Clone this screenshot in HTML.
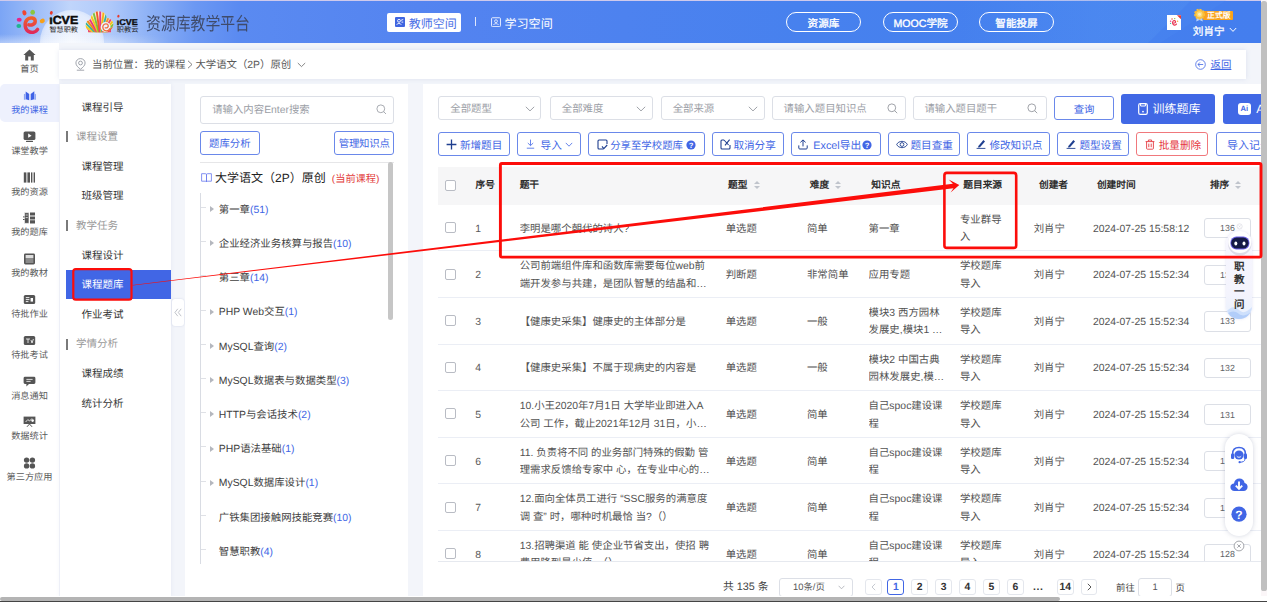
<!DOCTYPE html>
<html lang="zh-CN">
<head>
<meta charset="utf-8">
<title>资源库教学平台</title>
<style>
html,body{margin:0;padding:0}
body{width:1267px;height:602px;overflow:hidden;position:relative;background:#f3f5fa;font-family:"Liberation Sans",sans-serif;font-size:10.4px;line-height:14px;color:#333;text-rendering:geometricPrecision;-webkit-font-smoothing:antialiased}
*{box-sizing:border-box}
.abs{position:absolute}
svg{display:block}
/* ---------- header ---------- */
#hdr{position:absolute;left:0;top:0;width:1261px;height:43.4px;overflow:hidden;
 background:linear-gradient(90deg,#7ba5f5 0,#98b9f7 30px,#c0d5fb 70px,#afc9fa 110px,#8db1f6 150px,#6c98f3 195px,#5a8af1 240px,#5383f0 450px,#4781ee 800px,#4580ee 1000px,#447eee 1261px)}
#hdr .cloud{position:absolute;left:40px;top:10px;width:64px;height:64px;border-radius:50%;background:radial-gradient(circle,rgba(255,255,255,.8) 0,rgba(255,255,255,.6) 62%,rgba(255,255,255,0) 100%)}
#hdr .glow{position:absolute;left:0;top:34px;width:170px;height:10px;background:linear-gradient(180deg,rgba(255,255,255,0),rgba(255,255,255,.45));-webkit-mask-image:linear-gradient(90deg,#000 0,#000 60%,transparent 100%)}
#hdr .topline{position:absolute;left:0;top:0;width:100%;height:1px;background:#cfcaec}
#title{position:absolute;left:146px;top:12.6px;font-size:18px;line-height:22px;color:#3f4b6b;white-space:nowrap;transform:scaleX(.825);transform-origin:0 0;font-weight:300}
.pill{position:absolute;top:12px;height:20px;width:75px;border:1px solid #fff;border-radius:10px;color:#fff;font-size:10.6px;line-height:18px;padding-top:1.6px;text-align:center;-webkit-text-stroke:.35px #fff;white-space:nowrap}
#tsp{position:absolute;left:387px;top:12.8px;width:74px;height:19.2px;background:#fff;border-radius:2px;color:#4a6fe6;font-size:12px;line-height:19px;white-space:nowrap}
#lsp{position:absolute;left:491px;top:13px;height:19px;color:#fff;font-size:12.1px;line-height:19px;white-space:nowrap}
#uname{position:absolute;left:1192.8px;top:23.6px;color:#fff;font-size:10.6px;line-height:16px;white-space:nowrap;-webkit-text-stroke:.3px #fff}
#badge{position:absolute;left:1203px;top:10.6px;width:29.6px;height:9.4px;background:#f9a31c;color:#fff;font-size:7.8px;line-height:9.4px;font-weight:bold;padding-left:2px;text-align:center;border-radius:1px;white-space:nowrap}
/* ---------- left nav ---------- */
#nav{position:absolute;left:0;top:43px;width:59px;height:554px;background:#fff}
.ni{position:absolute;left:0;width:59px;height:38px;text-align:center;font-size:9.2px;line-height:12px;color:#5a5a5a;white-space:nowrap}
.ni svg{position:absolute;left:23px;top:6px}
.ni span{position:absolute;left:0;width:59px;top:20px}
.ni.on{background:#eef1fd;border-radius:5px 0 0 5px;color:#4166e5}
/* ---------- breadcrumb ---------- */
#bc{position:absolute;left:59px;top:49.6px;width:1187.4px;height:29.4px;background:#fff;box-shadow:0 0 5px rgba(120,140,190,.18);font-size:10.4px;line-height:29px;color:#585858;white-space:nowrap}
/* ---------- side menu ---------- */
#sm{position:absolute;left:60px;top:84px;width:111px;height:513px;background:#fff;box-shadow:0 0 4px rgba(120,140,190,.12)}
.mi{position:absolute;left:0;width:111px;height:29.6px;line-height:29.6px;padding-top:1.7px;font-size:10.5px;color:#363636;padding-left:21.5px;white-space:nowrap}
.mg{position:absolute;left:0;width:111px;height:29.6px;line-height:29.6px;padding-top:1.7px;font-size:10.5px;color:#999;padding-left:16px;white-space:nowrap}
.mg:before{content:"";position:absolute;left:6.3px;top:9.8px;width:1.3px;height:11px;background:#7a7a7a}
.mi.on{background:#4166e5;color:#fff;left:6px;width:105px;padding-left:15.5px}

/* ---------- tree panel ---------- */
#tp{position:absolute;left:185px;top:84px;width:223.4px;height:513px;background:#fff}
.inp{position:absolute;border:1px solid #dcdfe6;border-radius:3px;background:#fff;color:#9b9ea6;font-size:10.4px;white-space:nowrap}
.ob{position:absolute;height:23.4px;border:1px solid #6a88ea;border-radius:3px;background:#fff;color:#4166e5;font-size:10.4px;line-height:21.4px;white-space:nowrap;padding-top:2.6px}
.tn{position:absolute;left:33.8px;height:14px;line-height:14px;margin-top:1.3px;font-size:10.4px;color:#404040;white-space:nowrap}
.tn i{font-style:normal;color:#4166e5}
.tk{position:absolute;left:15.6px;width:5.8px;height:1px;background:#dfe1e6;margin-top:-2.6px}
.ta{position:absolute;left:25.4px;width:0;height:0;margin-top:-.5px;border-left:4.4px solid #b4b7be;border-top:3.3px solid transparent;border-bottom:3.3px solid transparent}

/* ---------- main panel ---------- */
#mp{position:absolute;left:423px;top:84px;width:838px;height:513px;background:#fff;overflow:hidden}
.sel{position:absolute;top:12.2px;height:23.4px;line-height:21.4px;padding-left:11px;padding-top:2px}
.sel svg{position:absolute;top:8.4px}
.b2{top:48.4px;padding:0;text-align:left}
.b2 svg{position:absolute}
.b2 span{position:absolute;top:2.6px}
.pb{position:absolute;top:9.6px;height:30px;border-radius:3px;background:#4168e5;color:#fff;font-size:12px;line-height:30px;white-space:nowrap}
/* table */
#th{position:absolute;left:15.3px;top:82.6px;width:830px;height:38.2px;background:#f6f6f7;font-weight:bold;color:#2e2e2e;font-size:9.7px}
#th span{position:absolute;top:12.3px;line-height:14px;white-space:nowrap}
.so{position:absolute;top:14.4px;width:6px;height:10px}
.so:before,.so:after{content:"";position:absolute;left:0;border-left:3px solid transparent;border-right:3px solid transparent}
.so:before{top:0;border-bottom:3.6px solid #c0c4cc}
.so:after{top:5.4px;border-top:3.6px solid #c0c4cc}
#tb{position:absolute;left:15.3px;top:120.8px;width:830px;height:356.6px;overflow:hidden}
.tr{position:absolute;left:0;width:830px;height:46.6px;border-bottom:1px solid #ebeef5}
.c{position:absolute;top:0;height:45.6px;padding-top:3.4px;display:flex;align-items:center;line-height:17.4px;color:#525252}
.c p{margin:0;max-height:34.8px;overflow:hidden}
.ck{position:absolute;left:6.6px;width:11px;height:11px;border:1px solid #b9bcc4;border-radius:2px;background:#fff}
.c1{left:37px;color:#5a5a5a}.c2{left:81.4px;width:190px}.c3{left:287.4px}.c4{left:368.7px}.c5{left:430.3px;width:76px}.c6{left:521.7px;width:48px}.c7{left:595.4px}.c8{left:654.6px;white-space:nowrap}
.si{position:absolute;left:765.9px;top:13.2px;width:46.5px;height:20.4px;border:1px solid #dcdfe6;border-radius:3px;text-align:center;font-size:8.8px;line-height:18.4px;padding-top:.2px;color:#606266}
/* pagination */
#pg{position:absolute;left:0;top:490px;width:838px;height:23px;font-size:10.4px;color:#444}
#pg .n{position:absolute;top:4.9px;width:16.8px;height:16.6px;border:1px solid #e4e7ed;border-radius:3px;text-align:center;line-height:14.6px;padding-top:.9px;font-weight:bold;color:#333;background:#fff;font-size:10.4px}
#pg .n.on{border-color:#4166e5;color:#4166e5}
</style>
</head>
<body>

<!-- ================= HEADER ================= -->
<div id="hdr">
  <div class="cloud"></div>
  <div class="glow"></div>
  <div class="topline"></div>
  <svg class="abs" style="left:960px;top:0" width="301" height="43" viewBox="0 0 301 43"><defs><linearGradient id="sg" x1="0" y1="0" x2="1" y2="0"><stop offset="0" stop-color="#5a9bf5" stop-opacity="0"/><stop offset=".6" stop-color="#5a9bf5" stop-opacity=".3"/><stop offset="1" stop-color="#5a9bf5" stop-opacity=".3"/></linearGradient></defs><path d="M0 0 H231.5 L188 43 H0 Z" fill="url(#sg)"/><path d="M231.5 0 H266.6 L200 43 H188 Z" fill="#5a9bf5" opacity=".12"/></svg>
  <svg class="abs" style="left:0;top:0" width="146" height="43" viewBox="0 0 146 43">
    <defs>
      <linearGradient id="eg" x1="0" y1="0" x2="0" y2="1"><stop offset="0" stop-color="#f0602a"/><stop offset="1" stop-color="#e02a5a"/></linearGradient>
    </defs>
    <!-- logo 1 -->
    <ellipse cx="24.4" cy="12.8" rx="2" ry="2.6" fill="#f0452f" transform="rotate(-20 24.4 12.8)"/>
    <ellipse cx="32.7" cy="12.2" rx="2.3" ry="2.5" fill="#8cc63f"/>
    <ellipse cx="19.2" cy="19.7" rx="2.5" ry="2" fill="#e6258a"/>
    <ellipse cx="18.8" cy="26" rx="2.4" ry="1.9" fill="#1fb58f"/>
    <ellipse cx="42.3" cy="20.9" rx="2.6" ry="2.2" fill="#f6a01a" transform="rotate(-25 42.3 20.9)"/>
    <path d="M28.8 24.9 C31.6 25.6 35.4 24 35.2 21 C35 17.8 30 16.8 27.2 19.6 C23.8 23 24.6 30.4 29.8 32 C33 33 36.2 31.6 37.6 29.4" fill="none" stroke="url(#eg)" stroke-width="3.5" stroke-linecap="round"/>
    <g font-family="Liberation Sans, sans-serif" font-weight="bold" fill="#0b0b0b">
      <text x="49.2" y="24" font-size="11.8" textLength="29" lengthAdjust="spacingAndGlyphs" stroke="#0b0b0b" stroke-width=".5">ıCVE</text>
      <text x="49.4" y="31.6" font-size="7" textLength="28.6" lengthAdjust="spacingAndGlyphs" font-weight="normal" fill="#222">智慧职教</text>
      <text x="116.8" y="24.6" font-size="8.4" textLength="20.8" lengthAdjust="spacingAndGlyphs" stroke="#0b0b0b" stroke-width=".4">ıCVE</text>
      <text x="116.8" y="32" font-size="7.2" textLength="21.6" lengthAdjust="spacingAndGlyphs" font-weight="normal" fill="#222">职教云</text>
    </g>
    <ellipse cx="51.3" cy="12.9" rx="1.4" ry="1.8" fill="#e8392c" transform="rotate(25 51.3 12.9)"/>
    <ellipse cx="118.4" cy="16.2" rx="1.1" ry="1.4" fill="#e8392c" transform="rotate(25 118.4 16.2)"/>
    <!-- logo 2 : fan cloud -->
    <clipPath id="cl"><circle cx="91.6" cy="25.4" r="6"/><circle cx="98.8" cy="19.6" r="8.4"/><circle cx="106.8" cy="24.6" r="6.6"/><rect x="88" y="25" width="23" height="7.2"/></clipPath>
    <g clip-path="url(#cl)"><rect x="84" y="10" width="32" height="24" fill="#fbe9c8"/>
    <g stroke-width="1.9" fill="none">
      <path d="M100.2 37.5 L68.7 24.8" stroke="#f3a11b"/>
      <path d="M100.2 37.5 L70.6 20.7" stroke="#e8457a"/>
      <path d="M100.2 37.5 L73.1 17.0" stroke="#f6d01b"/>
      <path d="M100.2 37.5 L76.0 13.6" stroke="#35b3a6"/>
      <path d="M100.2 37.5 L79.4 10.6" stroke="#f08a1c"/>
      <path d="M100.2 37.5 L83.1 8.1" stroke="#e6397f"/>
      <path d="M100.2 37.5 L87.1 6.1" stroke="#f4c51c"/>
      <path d="M100.2 37.5 L91.3 4.7" stroke="#7ac143"/>
      <path d="M100.2 37.5 L95.7 3.8" stroke="#ee5a2b"/>
      <path d="M100.2 37.5 L100.2 3.5" stroke="#e5378a"/>
      <path d="M100.2 37.5 L104.7 3.8" stroke="#f5b11b"/>
      <path d="M100.2 37.5 L109.1 4.7" stroke="#35b3a6"/>
      <path d="M100.2 37.5 L113.3 6.1" stroke="#f2902a"/>
      <path d="M100.2 37.5 L117.3 8.1" stroke="#e84a77"/>
      <path d="M100.2 37.5 L121.0 10.6" stroke="#f4c31c"/>
      <path d="M100.2 37.5 L124.4 13.6" stroke="#7ac143"/>
      <path d="M100.2 37.5 L127.3 17.0" stroke="#ee5a2b"/>
      <path d="M100.2 37.5 L129.8 20.7" stroke="#e6397f"/>
      <path d="M100.2 37.5 L131.7 24.8" stroke="#f6c21b"/>
    </g></g>
    <circle cx="105.6" cy="27" r="4.9" fill="#eef2fc"/>
    <path d="M105.2 27.8 C107 28.4 108.6 27 108.2 25.4 C107.7 23.6 104.8 23.2 103.4 25.2 C102 27.2 103.2 30.6 106 30.8 C107.8 30.9 109.2 30 109.9 28.6" fill="none" stroke="#ef6a3a" stroke-width="1.3" stroke-linecap="round"/>
  </svg>
  <div id="title">资源库教学平台</div>

  <div id="tsp">
    <svg class="abs" style="left:8.2px;top:4.4px" width="10" height="10" viewBox="0 0 9 9"><rect x="0" y="0" width="9" height="9" rx="1" fill="#3f65e0"/><circle cx="3.6" cy="3.4" r="1.3" fill="none" stroke="#fff" stroke-width=".8"/><path d="M1.6 7 C1.8 5.4 5.2 5.4 5.6 7 M5.4 3 L7.4 2.2 M5.8 4.6 L7.4 4.6" fill="none" stroke="#fff" stroke-width=".8"/></svg>
    <span class="abs" style="left:21.8px;top:2.6px">教师空间</span>
  </div>
  <div class="abs" style="left:475px;top:17px;width:1px;height:9px;background:#dfe7fb"></div>
  <div id="lsp">
    <svg class="abs" style="left:0;top:4px" width="10" height="10.4" viewBox="0 0 9 9"><rect x=".5" y=".5" width="8" height="8" rx=".8" fill="none" stroke="#e6edff" stroke-width=".9"/><circle cx="4.5" cy="3.6" r="1.3" fill="none" stroke="#e6edff" stroke-width=".8"/><path d="M2.2 7 C2.6 5.4 6.4 5.4 6.8 7" fill="none" stroke="#e6edff" stroke-width=".8"/></svg>
    <span class="abs" style="left:13.4px;top:1.9px">学习空间</span>
  </div>

  <div class="pill" style="left:786px">资源库</div>
  <div class="pill" style="left:883px">MOOC学院</div>
  <div class="pill" style="left:979px">智能投屏</div>

  <!-- avatar -->
  <div class="abs" style="left:1167px;top:15.2px;width:14.4px;height:14.8px;background:#fff;overflow:hidden">
    <svg width="14.4" height="14.8" viewBox="0 0 16 16"><path d="M7.4 8.6 C8.4 9 9.8 8.2 9.6 7 C9.4 5.8 7.4 5.6 6.6 6.8 C5.6 8.4 6.4 10.8 8.4 11 C9.4 11.1 10.2 10.6 10.6 9.8" fill="none" stroke="#e8334f" stroke-width="1.2" stroke-linecap="round"/><circle cx="5.6" cy="4.2" r=".8" fill="#f0452f"/><circle cx="8.6" cy="3.8" r=".8" fill="#8cc63f"/><circle cx="4" cy="6.6" r=".8" fill="#e6258a"/><circle cx="4" cy="9" r=".7" fill="#1fb58f"/><circle cx="11.8" cy="6.6" r=".8" fill="#f6a01a"/><path d="M11 0 H16 V5 Z" fill="#e23b3b"/></svg>
  </div>
  <div id="badge">正式版</div>
  <svg class="abs" style="left:1193.4px;top:8.2px" width="13" height="15" viewBox="0 0 13 15"><path d="M4 9 L3.2 13.6 L6.5 12 L9.8 13.6 L9 9 Z" fill="#cfe0f8" opacity=".85"/><circle cx="6.5" cy="6.2" r="4.7" fill="#f9bf3a" stroke="#f9bf3a" stroke-width="1.6" stroke-dasharray="1.9 1.2"/><circle cx="6.5" cy="6.2" r="3" fill="#fbd873"/><circle cx="6.5" cy="6.2" r="1.5" fill="#fdeeb5"/></svg>
  <div id="uname">刘肖宁</div>
  <svg class="abs" style="left:1228.6px;top:26.6px" width="8" height="6" viewBox="0 0 8 6"><path d="M.8 1 L4 4.4 L7.2 1" fill="none" stroke="#fff" stroke-width="1"/></svg>
</div>

<!-- ================= LEFT NAV ================= -->
<div id="nav">
  <div class="ni" style="top:0"><svg width="13" height="12" viewBox="0 0 13 12"><path d="M6.5 .4 L12.6 6 H10.8 V11.4 H7.8 V7.6 H5.2 V11.4 H2.2 V6 H.4 Z" fill="#555"/></svg><span>首页</span></div>
  <div class="ni on" style="top:41px"><svg width="13" height="11" viewBox="0 0 13 11"><path d="M2.7 1.4 L6.2 3.9 V10.3 L2.7 9.3 Z M11.3 1.2 L7.7 3.9 V10.3 L11.3 9.3 Z" fill="#3f62e6"/><path d="M.9 4.2 L2.5 3.6 V9.7 H.9 Z M11.5 3.6 L12.9 4.2 V9.7 H11.5 Z" fill="#8ba3f1"/></svg><span>我的课程</span></div>
  <div class="ni" style="top:81.8px"><svg width="13" height="11" viewBox="0 0 13 11"><rect x=".6" y=".4" width="11.8" height="8.6" rx="1.6" fill="#555"/><path d="M5.2 2.6 L8.6 4.7 L5.2 6.8 Z" fill="#fff"/><rect x="3" y="9.8" width="7" height="1.2" rx=".5" fill="#555"/></svg><span>课堂教学</span></div>
  <div class="ni" style="top:122.6px"><svg width="13" height="11" viewBox="0 0 13 11"><rect x=".8" y=".4" width="2.6" height="10.2" fill="#555"/><rect x="4.4" y=".4" width="2.6" height="10.2" fill="#555"/><rect x="8" y=".4" width="1.4" height="10.2" fill="#555"/><rect x="10.6" y=".4" width="1.4" height="10.2" fill="#555"/></svg><span>我的资源</span></div>
  <div class="ni" style="top:163.4px"><svg width="13" height="12" viewBox="0 0 13 12"><path d="M1.4 .6 H6 V11.4 H1.4 Z M2.6 3 H4.8 M2.6 5.6 H4.8" fill="#555" stroke="#fff" stroke-width=".7"/><path d="M7 .6 H12 V3.6 H7 Z M7 4.4 H12 V7.4 H7 Z M7 8.2 H12 V11.4 H7 Z" fill="#555"/><rect x="0" y="4.4" width="1.6" height="1" fill="#555"/><rect x="0" y="7" width="1.6" height="1" fill="#555"/></svg><span>我的题库</span></div>
  <div class="ni" style="top:204.2px"><svg width="13" height="12" viewBox="0 0 13 12"><rect x="1" y=".6" width="11" height="10.8" rx="1.4" fill="#555"/><rect x="2.6" y="2" width="7.8" height="3.4" fill="#ddd"/><path d="M2.6 7 H10.4 M2.6 9 H10.4" stroke="#ddd" stroke-width=".8"/></svg><span>我的教材</span></div>
  <div class="ni" style="top:245px"><svg width="13" height="11" viewBox="0 0 13 11"><rect x=".8" y="1" width="11.4" height="9" rx="1.6" fill="#555"/><path d="M2.8 3.6 H6.4 M2.8 5.6 H6.4 M2.8 7.6 H5.4" stroke="#fff" stroke-width=".9"/><path d="M7.6 4 H10 V7.6 H7.6 Z" fill="#fff"/></svg><span>待批作业</span></div>
  <div class="ni" style="top:285.8px"><svg width="13" height="11" viewBox="0 0 13 11"><rect x=".8" y="1" width="11.4" height="9" rx="1.6" fill="#555"/><path d="M3 4 H7 M5 4 V8 M8 5 L9 8 L10.4 4" stroke="#fff" stroke-width=".8" fill="none"/></svg><span>待批考试</span></div>
  <div class="ni" style="top:326.6px"><svg width="13" height="11" viewBox="0 0 13 11"><path d="M2 .8 H11 Q12.4 .8 12.4 2.2 V6.6 Q12.4 8 11 8 H6 L3.4 10.4 V8 H2 Q.6 8 .6 6.6 V2.2 Q.6 .8 2 .8 Z" fill="#555"/><path d="M3.4 3.4 H9.6 M3.4 5.4 H7.6" stroke="#fff" stroke-width=".8"/></svg><span>消息通知</span></div>
  <div class="ni" style="top:367.4px"><svg width="13" height="11" viewBox="0 0 13 11"><rect x=".6" y=".6" width="11.8" height="7.4" fill="#555"/><path d="M2.6 6 L4.8 3.6 L6.6 5 L9 2.4" stroke="#fff" stroke-width=".8" fill="none"/><circle cx="9.6" cy="4.6" r="1.3" fill="#fff"/><path d="M4 10.8 L6.5 8 L9 10.8" stroke="#555" stroke-width="1" fill="none"/></svg><span>数据统计</span></div>
  <div class="ni" style="top:408.2px"><svg width="13" height="12" viewBox="0 0 13 12"><circle cx="3.6" cy="3.1" r="2.7" fill="#555"/><circle cx="9.4" cy="3.1" r="2.7" fill="#555"/><circle cx="3.6" cy="8.9" r="2.7" fill="#555"/><circle cx="9.4" cy="8.9" r="2.7" fill="#555"/></svg><span>第三方应用</span></div>
</div>

<!-- ================= BREADCRUMB ================= -->
<div id="bc">
  <svg class="abs" style="left:15.5px;top:8.6px" width="11" height="13" viewBox="0 0 11 13"><path d="M5.5 .6 C2.8 .6 .9 2.6 .9 5 C.9 7.6 3.4 9.6 5.5 11.2 C7.6 9.6 10.1 7.6 10.1 5 C10.1 2.6 8.2 .6 5.5 .6 Z" fill="none" stroke="#8a8f99" stroke-width=".8"/><circle cx="5.5" cy="5" r="1.9" fill="none" stroke="#8a8f99" stroke-width=".8"/><path d="M1.8 12.2 H9.2" stroke="#8a8f99" stroke-width=".8"/></svg>
  <span class="abs" style="left:33px;top:1.5px">当前位置：我的课程</span>
  <svg class="abs" style="left:128px;top:10px" width="6" height="9" viewBox="0 0 6 9"><path d="M1 .8 L5 4.5 L1 8.2" fill="none" stroke="#666" stroke-width=".8"/></svg>
  <span class="abs" style="left:136.4px;top:1.5px">大学语文（2P）原创</span>
  <svg class="abs" style="left:238px;top:12px" width="9" height="6" viewBox="0 0 9 6"><path d="M.8 1 L4.5 4.6 L8.2 1" fill="none" stroke="#666" stroke-width=".8"/></svg>
  <svg class="abs" style="left:1136px;top:9.4px" width="11" height="11" viewBox="0 0 11 11"><circle cx="5.5" cy="5.5" r="4.8" fill="none" stroke="#4166e5" stroke-width=".8"/><path d="M8.2 5.5 H3 M5 3.4 L2.9 5.5 L5 7.6" fill="none" stroke="#4166e5" stroke-width=".8"/></svg>
  <span class="abs" style="left:1151.6px;top:1.5px;color:#4166e5;text-decoration:underline;text-underline-offset:.5px;text-decoration-thickness:.7px">返回</span>
</div>

<!-- ================= SIDE MENU ================= -->
<div id="sm">
  <div class="mi" style="top:8px">课程引导</div>
  <div class="mg" style="top:37.6px">课程设置</div>
  <div class="mi" style="top:67.2px">课程管理</div>
  <div class="mi" style="top:96.8px">班级管理</div>
  <div class="mg" style="top:126.4px">教学任务</div>
  <div class="mi" style="top:156px">课程设计</div>
  <div class="mi on" style="top:185.6px">课程题库</div>
  <div class="mi" style="top:215.2px">作业考试</div>
  <div class="mg" style="top:244.8px">学情分析</div>
  <div class="mi" style="top:274.4px">课程成绩</div>
  <div class="mi" style="top:304px">统计分析</div>
</div>
<!-- collapse handle -->
<div class="abs" style="left:172px;top:299px;width:12.4px;height:27.4px;background:#fff;border-radius:3px;box-shadow:0 0 2px rgba(100,120,170,.25)">
  <svg class="abs" style="left:2.2px;top:9.4px" width="8" height="9" viewBox="0 0 8 9"><path d="M3.8 .8 L.9 4.5 L3.8 8.2 M7.2 .8 L4.3 4.5 L7.2 8.2" fill="none" stroke="#b0b4bc" stroke-width=".8"/></svg>
</div>

<!-- ================= TREE PANEL ================= -->
<div id="tp">
  <div class="inp" style="left:15.2px;top:12.2px;width:194px;height:28.2px;line-height:25.2px;padding-left:11px;padding-top:.9px">请输入内容Enter搜索
    <svg class="abs" style="left:174.6px;top:7.2px" width="11" height="11" viewBox="0 0 11 11"><circle cx="4.8" cy="4.8" r="3.9" fill="none" stroke="#9a9da4" stroke-width=".85"/><path d="M7.6 7.6 L10 10" stroke="#9a9da4" stroke-width=".85"/></svg>
  </div>
  <div class="ob" style="left:15.2px;top:46.6px;width:59.4px;height:24px;text-align:center">题库分析</div>
  <div class="ob" style="left:149px;top:46.6px;width:60.4px;height:24px;text-align:center;letter-spacing:-.2px">管理知识点</div>
  <!-- title -->
  <svg class="abs" style="left:16.2px;top:89.4px" width="11" height="10" viewBox="0 0 11 10"><path d="M.6 .7 H4.4 Q5.5 .7 5.5 1.7 V9 Q5.5 8.2 4.4 8.2 H.6 Z M10.4 .7 H6.6 Q5.5 .7 5.5 1.7 V9 Q5.5 8.2 6.6 8.2 H10.4 Z" fill="none" stroke="#6f80ef" stroke-width=".85"/></svg>
  <div class="abs" style="left:30px;top:86px;font-size:12px;line-height:16px;color:#222;white-space:nowrap">大学语文（2P）原创</div>
  <div class="abs" style="left:146.8px;top:88.6px;font-size:10.2px;line-height:14px;color:#e23b3b;white-space:nowrap">(当前课程)</div>
  <div class="abs" style="left:15.2px;top:78px;width:194px;height:1px;background:#e6e6e8"></div>
  <!-- inner scrollbar -->
  <div class="abs" style="left:203px;top:78px;width:5.4px;height:158px;border-radius:3px;background:#c6c6c6"></div>
  <!-- guide line -->
  <div class="abs" style="left:15.2px;top:109px;width:1px;height:370.5px;background:#d9dce3"></div>

  <div class="tk" style="top:125.5px"></div><div class="ta" style="top:122.7px"></div><div class="tn" style="top:118.5px">第一章<i>(51)</i></div>
  <div class="tk" style="top:159.7px"></div><div class="ta" style="top:156.9px"></div><div class="tn" style="top:152.7px">企业经济业务核算与报告<i>(10)</i></div>
  <div class="tk" style="top:193.9px"></div><div class="tn" style="top:186.9px">第三章<i>(14)</i></div>
  <div class="tk" style="top:228.1px"></div><div class="ta" style="top:225.3px"></div><div class="tn" style="top:221.1px">PHP Web交互<i>(1)</i></div>
  <div class="tk" style="top:262.3px"></div><div class="ta" style="top:259.5px"></div><div class="tn" style="top:255.3px">MySQL查询<i>(2)</i></div>
  <div class="tk" style="top:296.5px"></div><div class="ta" style="top:293.7px"></div><div class="tn" style="top:289.5px">MySQL数据表与数据类型<i>(3)</i></div>
  <div class="tk" style="top:330.7px"></div><div class="ta" style="top:327.9px"></div><div class="tn" style="top:323.7px">HTTP与会话技术<i>(2)</i></div>
  <div class="tk" style="top:364.9px"></div><div class="ta" style="top:362.1px"></div><div class="tn" style="top:357.9px">PHP语法基础<i>(1)</i></div>
  <div class="tk" style="top:399.1px"></div><div class="ta" style="top:396.3px"></div><div class="tn" style="top:392.1px">MySQL数据库设计<i>(1)</i></div>
  <div class="tk" style="top:433.3px"></div><div class="tn" style="top:426.3px">广铁集团接触网技能竞赛<i>(10)</i></div>
  <div class="tk" style="top:467.5px"></div><div class="tn" style="top:460.5px">智慧职教<i>(4)</i></div>
</div>


<!-- ================= MAIN PANEL ================= -->
<div id="mp">
  <div class="inp sel" style="left:15.3px;width:103.2px">全部题型<svg style="left:85.6px" width="10" height="6" viewBox="0 0 10 6"><path d="M.8 .8 L5 4.9 L9.2 .8" fill="none" stroke="#8f9299" stroke-width=".85"/></svg></div>
  <div class="inp sel" style="left:126.8px;width:103.2px">全部难度<svg style="left:85.6px" width="10" height="6" viewBox="0 0 10 6"><path d="M.8 .8 L5 4.9 L9.2 .8" fill="none" stroke="#8f9299" stroke-width=".85"/></svg></div>
  <div class="inp sel" style="left:237.7px;width:104px">全部来源<svg style="left:86.2px" width="10" height="6" viewBox="0 0 10 6"><path d="M.8 .8 L5 4.9 L9.2 .8" fill="none" stroke="#8f9299" stroke-width=".85"/></svg></div>
  <div class="inp sel" style="left:349.4px;width:133.3px;padding-left:10.2px">请输入题目知识点<svg style="left:113.6px;top:6.2px" width="11" height="11" viewBox="0 0 11 11"><circle cx="4.8" cy="4.8" r="3.9" fill="none" stroke="#8f9299" stroke-width=".85"/><path d="M7.6 7.6 L10.2 10.2" stroke="#8f9299" stroke-width=".85"/></svg></div>
  <div class="inp sel" style="left:489.8px;width:134px;padding-left:10.6px">请输入题目题干<svg style="left:113.6px;top:6.2px" width="11" height="11" viewBox="0 0 11 11"><circle cx="4.8" cy="4.8" r="3.9" fill="none" stroke="#8f9299" stroke-width=".85"/><path d="M7.6 7.6 L10.2 10.2" stroke="#8f9299" stroke-width=".85"/></svg></div>
  <div class="ob" style="left:631.3px;top:12.2px;width:59.5px;height:23.8px;line-height:21.8px;text-align:center">查询</div>
  <div class="pb" style="left:698px;width:93.9px">
    <svg class="abs" style="left:16.8px;top:9.4px" width="10" height="12" viewBox="0 0 10 12"><rect x=".7" y=".7" width="8.6" height="10.6" rx="1.6" fill="none" stroke="#fff" stroke-width="1.2"/><path d="M2.6 1 V3 H7.4 V1" fill="none" stroke="#fff" stroke-width="1"/><circle cx="5" cy="8.6" r=".9" fill="#fff"/></svg>
    <span class="abs" style="left:31.4px;top:0">训练题库</span>
  </div>
  <div class="pb" style="left:799.8px;width:100px">
    <div class="abs" style="left:15.4px;top:9px;width:12.4px;height:12.4px;border-radius:3px;background:#fff;color:#4168e5;font-size:7.6px;line-height:12.4px;text-align:center;font-weight:bold">Ai</div>
    <span class="abs" style="left:33.4px;top:0">AI出题</span>
  </div>

  <!-- action buttons -->
  <div class="ob b2" style="left:15.3px;width:71.6px"><svg style="left:7px;top:5.4px" width="11" height="11" viewBox="0 0 11 11"><path d="M5.5 .6 V10.4 M.6 5.5 H10.4" stroke="#1f3f8f" stroke-width="1.3"/></svg><span style="left:20.6px;font-size:10.6px">新增题目</span></div>
  <div class="ob b2" style="left:94.4px;width:63.2px"><svg style="left:7.6px;top:6px" width="9" height="10" viewBox="0 0 9 10"><path d="M4.5 .6 V6.4 M1.8 4 L4.5 6.6 L7.2 4 M.8 9.2 H8.2" fill="none" stroke="#4166e5" stroke-width=".8"/></svg><span style="left:22.2px;font-size:10.6px">导入</span><svg style="left:46.4px;top:8.6px" width="8" height="6" viewBox="0 0 8 6"><path d="M.8 .9 L4 4.2 L7.2 .9" fill="none" stroke="#4166e5" stroke-width=".8"/></svg></div>
  <div class="ob b2" style="left:165.2px;width:116.4px"><svg style="left:7.6px;top:5.4px" width="11" height="11" viewBox="0 0 11 11"><path d="M6.4 10 H2 Q1 10 1 9 V2 Q1 1 2 1 H9 Q10 1 10 2 V5" fill="none" stroke="#1f3f8f" stroke-width="1.1"/><path d="M5 7.4 L6.8 9.6 L10.2 6" fill="none" stroke="#1f3f8f" stroke-width="1.1"/></svg><span style="left:21px">分享至学校题库</span><svg style="left:97px;top:6.2px" width="10" height="10" viewBox="0 0 10 10"><circle cx="5" cy="5" r="4.6" fill="#4166e5"/><text x="5" y="7.8" font-size="7.6" font-weight="bold" fill="#fff" text-anchor="middle" font-family="Liberation Sans, sans-serif">?</text></svg></div>
  <div class="ob b2" style="left:289px;width:71.6px"><svg style="left:7px;top:5.4px" width="11" height="11" viewBox="0 0 11 11"><path d="M4 1 H2 Q1 1 1 2 V9 Q1 10 2 10 H9 Q10 10 10 9 V6" fill="none" stroke="#1f3f8f" stroke-width="1.1"/><path d="M4 1 L8.6 6 M9.6 .6 L5 6.4" fill="none" stroke="#1f3f8f" stroke-width="1.1"/></svg><span style="left:20.4px;font-size:10.6px">取消分享</span></div>
  <div class="ob b2" style="left:368.3px;width:90px"><svg style="left:6px;top:5.4px" width="10" height="11" viewBox="0 0 10 11"><path d="M5 7.4 V1 M2.4 3.4 L5 .9 L7.6 3.4" fill="none" stroke="#1f3f8f" stroke-width="1"/><path d="M.8 6.4 V9 Q.8 10 1.8 10 H8.2 Q9.2 10 9.2 9 V6.4" fill="none" stroke="#1f3f8f" stroke-width="1"/></svg><span style="left:21px;font-size:10.8px">Excel导出</span><svg style="left:70px;top:6.2px" width="10" height="10" viewBox="0 0 10 10"><circle cx="5" cy="5" r="4.6" fill="#4166e5"/><text x="5" y="7.8" font-size="7.6" font-weight="bold" fill="#fff" text-anchor="middle" font-family="Liberation Sans, sans-serif">?</text></svg></div>
  <div class="ob b2" style="left:465.3px;width:71.6px"><svg style="left:6.6px;top:6.6px" width="12" height="9" viewBox="0 0 12 9"><path d="M.7 4.5 C2.6 .3 9.4 .3 11.3 4.5 C9.4 8.7 2.6 8.7 .7 4.5 Z" fill="none" stroke="#1f3f8f" stroke-width=".9"/><circle cx="6" cy="4.5" r="1.9" fill="none" stroke="#1f3f8f" stroke-width=".9"/></svg><span style="left:21.2px;font-size:10.6px">题目查重</span></div>
  <div class="ob b2" style="left:544.4px;width:83px"><svg style="left:7.6px;top:6px" width="10" height="10" viewBox="0 0 10 10"><path d="M2.4 7 L7.4 1 L9 2.4 L4 8.2 L2 8.6 Z" fill="#1f3f8f"/><path d="M.6 9.4 H9.4" stroke="#1f3f8f" stroke-width=".9"/></svg><span style="left:21px;font-size:10.6px">修改知识点</span></div>
  <div class="ob b2" style="left:634.4px;width:71.6px"><svg style="left:7.8px;top:6px" width="10" height="10" viewBox="0 0 10 10"><path d="M2.4 7 L7.4 1 L9 2.4 L4 8.2 L2 8.6 Z" fill="#1f3f8f"/><path d="M.6 9.4 H9.4" stroke="#1f3f8f" stroke-width=".9"/></svg><span style="left:21px;font-size:10.6px">题型设置</span></div>
  <div class="ob b2" style="left:713.2px;width:71.8px;border-color:#f0787c;color:#e5393f"><svg style="left:8px;top:5.4px" width="10" height="11" viewBox="0 0 10 11"><path d="M.6 2.6 H9.4 M3.4 2.4 V1 H6.6 V2.4 M1.6 2.8 V9.4 Q1.6 10.2 2.4 10.2 H7.6 Q8.4 10.2 8.4 9.4 V2.8 M3.8 4.6 V8.2 M6.2 4.6 V8.2" fill="none" stroke="#e5393f" stroke-width=".9"/></svg><span style="left:21.6px;font-size:10.6px">批量删除</span></div>
  <div class="ob b2" style="left:793.1px;width:70px"><span style="left:10px;font-size:11px">导入记录</span></div>

  <!-- table header -->
  <div id="th">
    <div class="ck" style="top:13px"></div>
    <span style="left:37.2px">序号</span>
    <span style="left:81.4px">题干</span>
    <span style="left:289.7px">题型</span><i class="so" style="left:315.4px"></i>
    <span style="left:371.5px">难度</span><i class="so" style="left:397.2px"></i>
    <span style="left:433px">知识点</span>
    <span style="left:525px">题目来源</span>
    <span style="left:600.7px">创建者</span>
    <span style="left:658.6px">创建时间</span>
    <span style="left:771.6px">排序</span><i class="so" style="left:797.2px"></i>
  </div>
  <div id="tb">
    <div class="tr" style="top:0.0px"><div class="ck" style="top:17.3px"></div><div class="c c1">1</div><div class="c c2"><p>李明是哪个朝代的诗人?</p></div><div class="c c3">单选题</div><div class="c c4">简单</div><div class="c c5"><p>第一章</p></div><div class="c c6"><p>专业群导入</p></div><div class="c c7">刘肖宁</div><div class="c c8">2024-07-25 15:58:12</div><div class="si">136</div></div>
    <div class="tr" style="top:46.6px"><div class="ck" style="top:17.3px"></div><div class="c c1">2</div><div class="c c2"><p>公司前端组件库和函数库需要每位web前端开发参与共建，是团队智慧的结晶和…</p></div><div class="c c3">判断题</div><div class="c c4">非常简单</div><div class="c c5"><p>应用专题</p></div><div class="c c6"><p>学校题库导入</p></div><div class="c c7">刘肖宁</div><div class="c c8">2024-07-25 15:52:34</div><div class="si">135</div></div>
    <div class="tr" style="top:93.2px"><div class="ck" style="top:17.3px"></div><div class="c c1">3</div><div class="c c2"><p>【健康史采集】健康史的主体部分是</p></div><div class="c c3">单选题</div><div class="c c4">一般</div><div class="c c5"><p>模块3 西方园林发展史,模块1 …</p></div><div class="c c6"><p>学校题库导入</p></div><div class="c c7">刘肖宁</div><div class="c c8">2024-07-25 15:52:34</div><div class="si">133</div></div>
    <div class="tr" style="top:139.8px"><div class="ck" style="top:17.3px"></div><div class="c c1">4</div><div class="c c2"><p>【健康史采集】不属于现病史的内容是</p></div><div class="c c3">单选题</div><div class="c c4">一般</div><div class="c c5"><p>模块2 中国古典园林发展史,模…</p></div><div class="c c6"><p>学校题库导入</p></div><div class="c c7">刘肖宁</div><div class="c c8">2024-07-25 15:52:34</div><div class="si">132</div></div>
    <div class="tr" style="top:186.4px"><div class="ck" style="top:17.3px"></div><div class="c c1">5</div><div class="c c2"><p>10.小王2020年7月1日 大学毕业即进入A公司 工作，截止2021年12月 31日，小…</p></div><div class="c c3">单选题</div><div class="c c4">简单</div><div class="c c5"><p>自己spoc建设课程</p></div><div class="c c6"><p>学校题库导入</p></div><div class="c c7">刘肖宁</div><div class="c c8">2024-07-25 15:52:34</div><div class="si">131</div></div>
    <div class="tr" style="top:233.0px"><div class="ck" style="top:17.3px"></div><div class="c c1">6</div><div class="c c2"><p>11. 负责将不同 的业务部门特殊的假勤 管理需求反馈给专家中 心，在专业中心的…</p></div><div class="c c3">单选题</div><div class="c c4">简单</div><div class="c c5"><p>自己spoc建设课程</p></div><div class="c c6"><p>学校题库导入</p></div><div class="c c7">刘肖宁</div><div class="c c8">2024-07-25 15:52:34</div><div class="si">130</div></div>
    <div class="tr" style="top:279.6px"><div class="ck" style="top:17.3px"></div><div class="c c1">7</div><div class="c c2"><p>12.面向全体员工进行 “SSC服务的满意度调 查” 时，哪种时机最恰 当?（）</p></div><div class="c c3">单选题</div><div class="c c4">简单</div><div class="c c5"><p>自己spoc建设课程</p></div><div class="c c6"><p>学校题库导入</p></div><div class="c c7">刘肖宁</div><div class="c c8">2024-07-25 15:52:34</div><div class="si">129</div></div>
    <div class="tr" style="top:326.2px"><div class="ck" style="top:17.3px"></div><div class="c c1">8</div><div class="c c2"><p>13.招聘渠道 能 使企业节省支出，使招 聘费用降到最少值。（）</p></div><div class="c c3">单选题</div><div class="c c4">简单</div><div class="c c5"><p>自己spoc建设课程</p></div><div class="c c6"><p>学校题库导入</p></div><div class="c c7">刘肖宁</div><div class="c c8">2024-07-25 15:52:34</div><div class="si">128</div></div>
  </div>

  <div class="abs" style="left:15.3px;top:477px;width:830px;height:1px;background:#e6e9ef"></div>
  <!-- pagination -->
  <div id="pg">
    <span class="abs" style="left:300px;top:5.4px;line-height:17.6px;font-size:10.8px">共 135 条</span>
    <div class="abs" style="left:355.6px;top:4.4px;width:74.4px;height:18.6px;border:1px solid #dcdfe6;border-radius:3px;line-height:16.6px;font-size:9.4px;padding-left:13.4px;color:#555">10条/页<svg class="abs" style="left:58.6px;top:6px" width="7" height="5" viewBox="0 0 7 5"><path d="M.6 .8 L3.5 3.8 L6.4 .8" fill="none" stroke="#a8abb2" stroke-width=".8"/></svg></div>
    <div class="n" style="left:442px;color:#c0c4cc;font-weight:normal"><svg class="abs" style="left:4.8px;top:3.4px" width="5" height="8" viewBox="0 0 5 8"><path d="M4.2 .8 L1 4 L4.2 7.2" fill="none" stroke="#c0c4cc" stroke-width=".9"/></svg></div>
    <div class="n on" style="left:464.4px">1</div>
    <div class="n" style="left:488.3px">2</div>
    <div class="n" style="left:512.2px">3</div>
    <div class="n" style="left:536.1px">4</div>
    <div class="n" style="left:560px">5</div>
    <div class="n" style="left:583.9px">6</div>
    <span class="abs" style="left:610px;top:4.8px;line-height:17.6px;font-weight:bold;letter-spacing:.6px;color:#333">...</span>
    <div class="n" style="left:633.9px">14</div>
    <div class="n" style="left:657.7px"><svg class="abs" style="left:5.2px;top:3.4px" width="5" height="8" viewBox="0 0 5 8"><path d="M.8 .8 L4 4 L.8 7.2" fill="none" stroke="#444" stroke-width=".9"/></svg></div>
    <span class="abs" style="left:693px;top:5.4px;line-height:17.6px;font-size:9.4px">前往</span>
    <div class="abs" style="left:715px;top:4.4px;width:34.4px;height:18.6px;border:1px solid #dcdfe6;border-radius:3px;text-align:center;line-height:16.6px;font-size:9.4px;color:#555">1</div>
    <span class="abs" style="left:752.4px;top:5.4px;line-height:17.6px;font-size:9.4px">页</span>
  </div>
</div>


<!-- ================= FLOATING WIDGETS ================= -->
<!-- robot assistant -->
<div class="abs" style="left:1226.4px;top:231px;width:25.6px;height:88px;border-radius:12.8px;background:linear-gradient(180deg,#f7f6fe 0,#f4f4fd 70%,#eaf1fd 100%);box-shadow:0 0 3px rgba(120,120,200,.22);overflow:hidden">
  <svg class="abs" style="left:0;top:72px" width="26" height="16" viewBox="0 0 26 16"><path d="M0 9 C5 3 9 3 13 7 C17 11 21 9 26 4 V16 H0 Z" fill="#c4d9fb" opacity=".75"/><path d="M0 12 C5 7 10 8 13 11 C17 14 22 12 26 8 V16 H0 Z" fill="#a3c3f8" opacity=".65"/></svg>
  <div class="abs" style="left:0;top:30.2px;width:25.6px;text-align:center;font-size:10.5px;line-height:12.5px;font-weight:bold;color:#333">职<br>教<br>一<br>问</div>
</div>
<svg class="abs" style="left:1226px;top:222px" width="28" height="36" viewBox="0 0 28 36">
  <circle cx="13.6" cy="4.4" r="2.6" fill="none" stroke="#d5d5dd" stroke-width=".6"/><path d="M12.6 3.4 L14.6 5.4 M14.6 3.4 L12.6 5.4" stroke="#d5d5dd" stroke-width=".6"/>
  <ellipse cx="13.8" cy="21.4" rx="11.8" ry="12.2" fill="#dcdce8"/>
  <ellipse cx="13.8" cy="20" rx="11.6" ry="11" fill="#fff"/>
  <rect x="4.4" y="14.6" width="19" height="12.8" rx="6" fill="#6e62e6"/>
  <rect x="5.2" y="15.4" width="17.4" height="11.2" rx="5.4" fill="#151a45"/>
  <ellipse cx="9.8" cy="21.4" rx="1.5" ry="2" fill="#fff"/><ellipse cx="18" cy="21.4" rx="1.5" ry="2" fill="#fff"/>
</svg>
<!-- tool pill -->
<div class="abs" style="left:1224.8px;top:433.6px;width:28px;height:102.6px;border-radius:14px;background:#fff;box-shadow:0 0 5px rgba(90,100,140,.28)"></div>
<svg class="abs" style="left:1230px;top:446px" width="18" height="78" viewBox="0 0 18 78">
  <!-- headset -->
  <path d="M2.6 10.4 V8 C2.6 3.8 5.4 1.6 9 1.6 C12.6 1.6 15.4 3.8 15.4 8 V10.4" fill="none" stroke="#4166e5" stroke-width="1.5"/>
  <rect x="1" y="7.6" width="3.2" height="5.4" rx="1.2" fill="#4166e5"/><rect x="13.8" y="7.6" width="3.2" height="5.4" rx="1.2" fill="#4166e5"/>
  <circle cx="9" cy="9" r="4.6" fill="#4166e5"/><path d="M6.8 10.2 C7.6 11.6 10.4 11.6 11.2 10.2" fill="none" stroke="#fff" stroke-width=".9"/>
  <path d="M15 13 C15 15.4 12.6 16.2 10 16.2" fill="none" stroke="#4166e5" stroke-width="1"/><circle cx="9.6" cy="16.2" r="1.1" fill="#4166e5"/>
  <!-- cloud download -->
  <path d="M4.6 45 C1.8 45 .4 43 .4 41 C.4 38.8 2.2 37.4 4 37.4 C4.4 34.2 6.8 32.6 9.4 32.6 C12.2 32.6 14.2 34.4 14.6 37 C16.4 37.2 17.6 38.8 17.6 40.8 C17.6 43.2 16 45 13.6 45 Z" fill="#4166e5"/>
  <path d="M9 35.6 V42.6 M5.8 39.6 L9 42.8 L12.2 39.6" fill="none" stroke="#fff" stroke-width="1.9"/>
  <!-- question -->
  <circle cx="9" cy="68.2" r="7.6" fill="#4166e5"/>
  <text x="9" y="72.6" font-size="12" font-weight="bold" fill="#fff" text-anchor="middle" font-family="Liberation Sans, sans-serif">?</text>
</svg>
<svg class="abs" style="left:1232.7px;top:540px" width="12" height="12" viewBox="0 0 12 12"><circle cx="6" cy="6" r="4.9" fill="#fff" stroke="#85888f" stroke-width=".75"/><path d="M4.3 4.3 L7.7 7.7 M7.7 4.3 L4.3 7.7" stroke="#85888f" stroke-width=".75"/></svg>

<!-- ================= BROWSER SCROLLBARS ================= -->
<div class="abs" style="left:1261px;top:0;width:6px;height:597px;background:#fbf6f8"></div>
<div class="abs" style="left:1261.3px;top:.6px;width:5.7px;height:590.2px;border-radius:2.6px;background:#c0c0c0"></div>
<div class="abs" style="left:0;top:596px;width:1267px;height:6px;background:#fff"></div>
<div class="abs" style="left:0;top:596.5px;width:1060px;height:4.1px;border-radius:2px;background:#b4b4b4"></div>
<div class="abs" style="left:0;top:600.6px;width:1267px;height:1.4px;background:#444"></div>

<!-- ================= RED ANNOTATIONS ================= -->
<svg class="abs" style="left:0;top:0;pointer-events:none" width="1267" height="602" viewBox="0 0 1267 602">
  <rect x="73.3" y="269.1" width="58.2" height="30.6" rx="2.5" fill="none" stroke="#fc0d0a" stroke-width="2.2"/>
  <rect x="500.4" y="163.5" width="760.6" height="93.6" rx="1.5" fill="none" stroke="#fc0d0a" stroke-width="2.9"/>
  <rect x="944.4" y="172.9" width="71.8" height="75" rx="2.5" fill="none" stroke="#fc0d0a" stroke-width="2.6"/>
  <polygon points="132.6,285.5 953.5,188.2 950.6,192.5 959.3,185.0 948.6,179.6 952.9,183.8 132.6,285.1" fill="#fc0d0a"/>
</svg>


</body>
</html>
